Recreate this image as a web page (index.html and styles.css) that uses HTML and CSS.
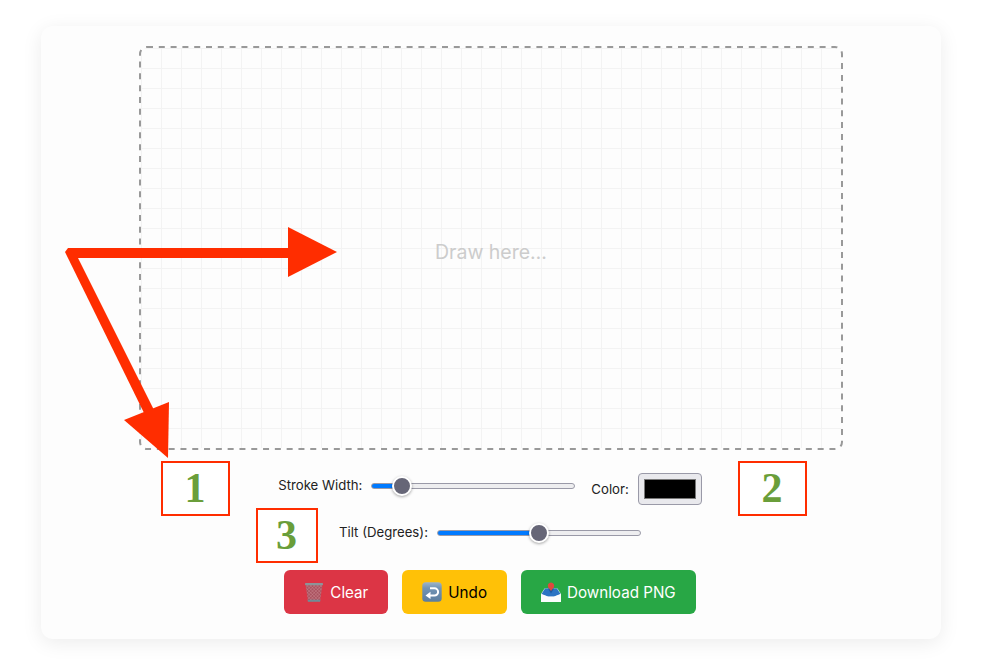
FILE: index.html
```html
<!DOCTYPE html>
<html lang="en">
<head>
<meta charset="utf-8">
<title>Draw</title>
<link rel="stylesheet" href="styles.css">
</head>
<body>
<main class="card">
  <div class="canvas">
    <svg class="dash" viewBox="0 0 704 404" aria-hidden="true"><rect x="1" y="1" width="702" height="402" rx="7"/></svg>
    <span class="placeholder">Draw here…</span>
  </div>
  <div class="controls">
    <div class="row row-top">
      <label class="field field-stroke">Stroke Width:
        <input class="slider" type="range" min="1" max="20" value="3" style="--fill:14.5%">
      </label>
      <label class="field">Color:
        <input class="color" type="color" value="#000000">
      </label>
    </div>
    <div class="row row-tilt">
      <label class="field">Tilt (Degrees):
        <input class="slider" type="range" min="-45" max="45" value="0" style="--fill:50%">
      </label>
    </div>
  </div>
  <div class="buttons">
    <button class="btn btn-clear" type="button">
      <svg class="emoji" viewBox="0 0 20 20" aria-hidden="true">
        <defs><pattern id="mesh" width="2.400" height="2.400" patternUnits="userSpaceOnUse" patternTransform="rotate(45)"><rect width="2.400" height="2.400" fill="#a9525f"/><path d="M0 0h2.400M0 0v2.400" stroke="#d08a93" stroke-width=".7"/></pattern></defs>
        <path d="M1.500 2.500h17L16 19.200H4z" fill="url(#mesh)"/>
        <rect x="1" y="1" width="18" height="2.200" rx=".8" fill="#8d9499"/>
        <path d="M3.600 17.800h12.800l-.3 1.900H3.900z" fill="#6f8c96"/>
      </svg>
      Clear
    </button>
    <button class="btn btn-undo" type="button">
      <svg class="emoji" viewBox="0 0 20 20" aria-hidden="true">
        <defs><linearGradient id="steel" x1="0" y1="0" x2="0" y2="1"><stop offset="0" stop-color="#9db4c9"/><stop offset=".3" stop-color="#7294b4"/><stop offset="1" stop-color="#5b7d9e"/></linearGradient></defs>
        <rect x=".3" y=".3" width="19.400" height="19.400" rx="3.500" fill="url(#steel)"/>
        <path d="M8 6.300h4.500a3.600 3.600 0 0 1 0 7.200H7.500" stroke="#fff" stroke-width="2" fill="none"/>
        <path d="M8.500 9.800v7.200L3.500 13.400z" fill="#fff"/>
      </svg>
      Undo
    </button>
    <button class="btn btn-download" type="button">
      <svg class="emoji" viewBox="0 0 20 20" aria-hidden="true">
        <path d="M3.500 6.500h13L20 12v8H0v-8z" fill="#eef2f6"/>
        <path d="M4 6.500h12L19.500 12 13 14.500H7L.5 12z" fill="#2c74c4"/>
        <path d="M7 6.500h6l-3 5z" fill="#1b5aa3"/>
        <path d="M10 0.500a3.200 3.200 0 0 1 2.800 4.700L10 9 7.200 5.200A3.200 3.200 0 0 1 10 .5z" fill="#e0483e"/>
        <path d="M0 12l7 2.800h6l7-2.800v8H0z" fill="#fbfcfd"/>
      </svg>
      Download PNG
    </button>
  </div>
</main>

<svg class="arrows" viewBox="0 0 1003 659" aria-hidden="true">
  <path class="shaft" d="M68 248h220v10H68z"/>
  <polygon class="head" points="288,227 337,252 288,277"/>
  <polygon class="shaft" points="65,252 68,248 78,258 155,412 146,417"/>
  <polygon class="head" points="169,402 124,420 168,458"/>
</svg>
<div class="note note-1">1</div>
<div class="note note-2">2</div>
<div class="note note-3">3</div>
</body>
</html>
```

FILE: styles.css
```css
* { box-sizing: border-box; }

html, body { height: 100%; }

body {
  margin: 0;
  background: #fff;
  font-family: Inter, "Liberation Sans", sans-serif;
  overflow: hidden;
}

.card {
  width: 900px;
  height: 613px;
  margin: 26px 0 0 41px;
  padding: 20px 0 25px;
  display: flex;
  flex-direction: column;
  align-items: center;
  background: #fdfdfd;
  border-radius: 12px;
  box-shadow: 0 4px 20px rgba(0, 0, 0, .08);
}

.canvas {
  position: relative;
  width: 704px;
  height: 404px;
  flex: none;
  padding-top: 8px;
  display: flex;
  align-items: center;
  justify-content: center;
  border: 2px solid transparent;
  border-radius: 8px;
  background-image:
    linear-gradient(#f3f3f3 1px, transparent 1px),
    linear-gradient(90deg, #f3f3f3 1px, transparent 1px);
  background-size: 20px 20px;
  background-clip: padding-box;
}

.dash {
  position: absolute;
  left: -2px;
  top: -2px;
  width: 704px;
  height: 404px;
  fill: none;
  stroke: #999;
  stroke-width: 2;
  stroke-dasharray: 6 5.8;
}

.placeholder {
  color: #ccc;
  font-size: 19.5px;
}

.controls {
  margin: 23px 2px 0 0;
  display: flex;
  flex-direction: column;
  align-items: center;
  gap: 15px;
}

.row {
  display: flex;
  align-items: flex-start;
  gap: 15px;
}

.field {
  display: flex;
  align-items: center;
  gap: 9px;
  font-size: 13.2px;
  color: #222;
}

.field-stroke { margin-right: 1px; }

.slider {
  -webkit-appearance: none;
  appearance: none;
  width: 204px;
  height: 22px;
  margin: 2px 0 0;
  background: transparent;
}

.slider::-webkit-slider-runnable-track {
  height: 6px;
  border: 1px solid #9a9aa8;
  border-radius: 3px;
  background: linear-gradient(90deg, #007aff var(--fill), #eeeef0 var(--fill));
}

.slider::-webkit-slider-thumb {
  -webkit-appearance: none;
  width: 20px;
  height: 20px;
  margin-top: -8px;
  border: 2px solid #fff;
  border-radius: 50%;
  background: #666677;
  box-shadow: 0 1px 3px rgba(0, 0, 0, .35);
}

.color {
  -webkit-appearance: none;
  appearance: none;
  width: 64px;
  height: 32px;
  margin: 0;
  padding: 5px;
  border: 1px solid #9a9aa8;
  border-radius: 4px;
  background: #e9e9ed;
}

.color::-webkit-color-swatch-wrapper { padding: 0; }

.color::-webkit-color-swatch {
  border: 1px solid #777;
  border-radius: 0;
}

.buttons {
  margin: 26px 2px 0 0;
  display: flex;
  gap: 14px;
}

.btn {
  height: 44px;
  padding: 0 20px;
  display: flex;
  align-items: center;
  gap: 6px;
  border: 0;
  border-radius: 6px;
  font-family: inherit;
  font-size: 15.2px;
  color: #fff;
}

.emoji { width: 20px; height: 20px; flex: none; }

.btn-clear { background: #dc3545; }
.btn-undo { background: #ffc107; color: #000; }
.btn-download { background: #28a745; }

.arrows {
  position: absolute;
  left: 0;
  top: 0;
  width: 1003px;
  height: 659px;
  pointer-events: none;
}

.shaft, .head { fill: #ff2d00; }

.note {
  position: absolute;
  display: flex;
  align-items: center;
  justify-content: center;
  padding: 0 1px 2px 0;
  border: 2px solid #ff2d00;
  background: #fff;
  color: #6a9e3a;
  font-family: "Liberation Serif", serif;
  font-weight: 700;
  font-size: 42px;
  line-height: 1;
}

.note-1 { left: 161px; top: 461px; width: 69px; height: 55px; }
.note-2 { left: 738px; top: 461px; width: 69px; height: 55px; }
.note-3 { left: 256px; top: 508px; width: 62px; height: 55px; }
```
